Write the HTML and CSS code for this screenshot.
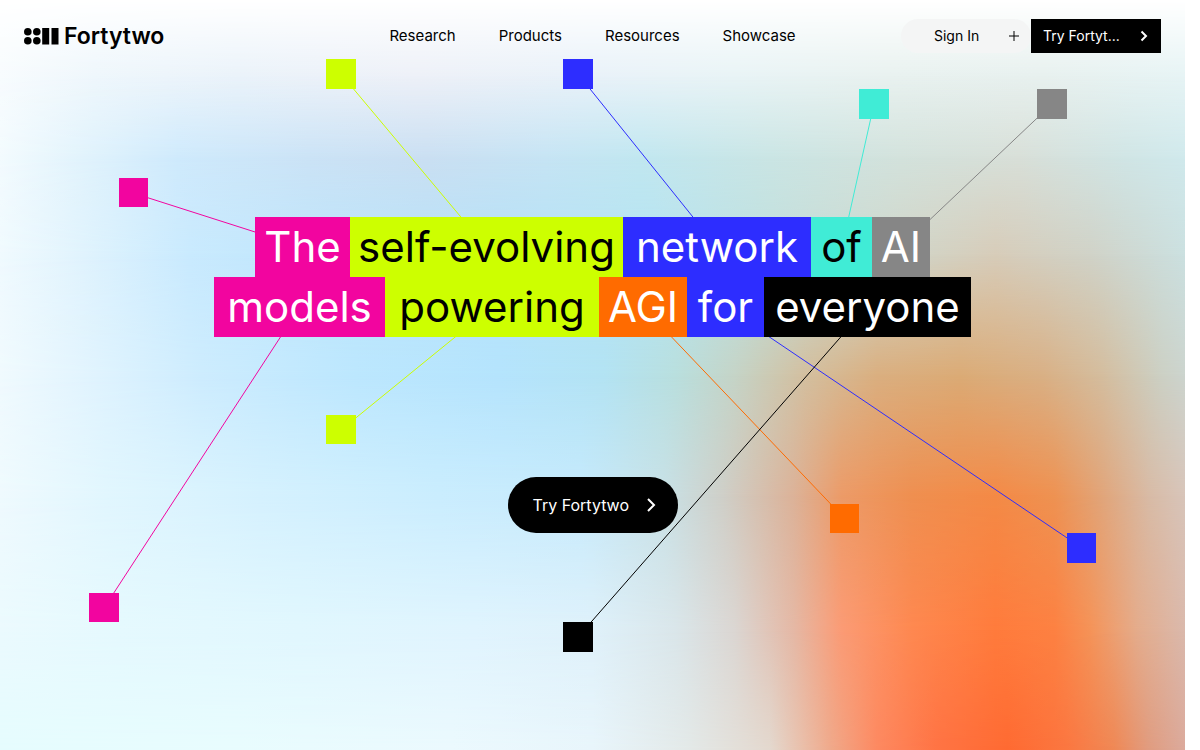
FILE: index.html
```html
<!DOCTYPE html>
<html lang="en">
<head>
    <meta charset="UTF-8">
    <meta name="viewport" content="width=device-width, initial-scale=1.0">
    <title>Fortytwo</title>
    <link rel="stylesheet" href="styles.css">
</head>
<body>
    <div class="page">
        <div class="glow" aria-hidden="true">
            <div class="band band-1"></div>
            <div class="band band-2"></div>
            <div class="band band-3"></div>
            <div class="band band-4"></div>
            <div class="band band-5"></div>
            <div class="band band-6"></div>
            <div class="band band-7"></div>
        </div>

        <!-- lines and nodes behind the headline -->
        <svg class="network" viewBox="0 0 1185 750" preserveAspectRatio="none" aria-hidden="true">
            <g class="lines">
                <path stroke="#f2059f" d="M133 193L302 247M104 608L300 307"/>
                <path stroke="#cdff00" d="M341 74L486 247M341 430L492 307"/>
                <path stroke="#2d2dff" d="M578 74L717 247M1082 548L725 307"/>
                <path stroke="#40ecd6" d="M874 104L842 247"/>
                <path stroke="#868686" d="M1052 104L901 247"/>
                <path stroke="#ff6b00" d="M845 519L643 307"/>
                <path stroke="#000" d="M578 637L867 307"/>
            </g>
            <path fill="#f2059f" d="M119 178h29v29h-29zM89 593h30v29h-30z"/>
            <path fill="#cdff00" d="M326 59h30v30h-30zM326 415h30v29h-30z"/>
            <path fill="#2d2dff" d="M563 59h30v30h-30zM1067 533h29v30h-29z"/>
            <path fill="#40ecd6" d="M859 89h30v30h-30z"/>
            <path fill="#868686" d="M1037 89h30v30h-30z"/>
            <path fill="#ff6b00" d="M830 504h29v29h-29z"/>
            <path fill="#000" d="M563 622h30v30h-30z"/>
        </svg>

        <header class="header">
            <a class="logo" href="#">
                <svg width="35" height="17" viewBox="0 0 35 17" aria-hidden="true">
                    <circle cx="3.800" cy="3.800" r="3.800"/>
                    <circle cx="12.800" cy="3.800" r="3.800"/>
                    <circle cx="3.800" cy="12.700" r="3.800"/>
                    <circle cx="12.800" cy="12.700" r="3.800"/>
                    <path d="M18.200 0h7v16.500h-7zM27.500 0h7v16.500h-7z"/>
                </svg>
                <span>Fortytwo</span>
            </a>
            <nav class="nav">
                <a href="#">Research</a>
                <a href="#">Products</a>
                <a href="#">Resources</a>
                <a href="#">Showcase</a>
            </nav>
            <div class="actions">
                <a class="sign-in" href="#">
                    <span>Sign In</span>
                    <svg width="12" height="12" viewBox="0 0 12 12" aria-hidden="true"><path d="M6 1v10M1 6h10"/></svg>
                </a>
                <a class="try" href="#">
                    <span>Try Fortyt...</span>
                    <svg width="8" height="12" viewBox="0 0 8 12" aria-hidden="true"><path d="M1.500 1.500L6 6L1.500 10.500"/></svg>
                </a>
            </div>
        </header>

        <main class="hero">
            <h1>
                <span class="row row-1"><span class="pink">The</span> <span class="lime">self-evolving</span> <span class="blue">network</span> <span class="teal">of</span> <span class="gray">AI</span></span>
                <span class="row row-2"><span class="pink">models</span> <span class="lime">powering</span> <span class="orange">AGI</span> <span class="blue">for</span> <span class="black">everyone</span></span>
            </h1>
            <a class="cta" href="#">
                <span>Try Fortytwo</span>
                <svg width="10" height="16" viewBox="0 0 10 16" aria-hidden="true"><path d="M2 2L8 8L2 14"/></svg>
            </a>
        </main>
    </div>
</body>
</html>
```
FILE: styles.css
```css
* {
    box-sizing: border-box;
}

body {
    margin: 0;
    padding-right: 15px;
    background-color: #fff;
    color: #000;
    font-family: Inter, "Liberation Sans", sans-serif;
}

a {
    color: inherit;
    text-decoration: none;
}

.page {
    position: relative;
    min-height: 100vh;
    overflow: hidden;
}

/* background: every band fades in over the one before it */
.glow,
.band,
.network {
    position: absolute;
    inset: 0;
    width: 100%;
    height: 100%;
}

.band-1 {
    background: linear-gradient(90deg, #f8fcfe 0%, #eff7fc 8%, #ebf3fa 20%, #eef1f8 35%, #e9f2f9 50%, #e9f4f6 62%, #e9f2f0 75%, #e8f1ef 88%, #e7f4f5 100%);
    mask-image: linear-gradient(transparent 0%, #000 10%);
}

.band-2 {
    background: linear-gradient(90deg, #f3fbfe 0%, #e1f3fc 7%, #cfeafc 15%, #cbe3f6 26%, #cadff2 36%, #c6e4f4 46%, #c1e7f0 54%, #cae5e4 65%, #d3e2dc 76%, #d8dfd8 86%, #d0e5e5 95%, #d0e9ec 100%);
    mask-image: linear-gradient(transparent 10%, #000 21%);
}

.band-3 {
    background: linear-gradient(90deg, #f0fafe 0%, #e0f3fd 7%, #c9eafe 16%, #bde5fb 28%, #b5e1f8 42%, #b5e4f2 55%, #bfe0de 64%, #cfd8cd 74%, #d7ccb9 84%, #d0d2c7 92%, #cbe0e0 100%);
    mask-image: linear-gradient(transparent 21%, #000 34%);
}

.band-4 {
    background: linear-gradient(90deg, #f0fafe 0%, #e2f4fe 7%, #cdecfe 17%, #bce7fe 30%, #b5e4fd 42%, #b3e3f3 51%, #b9dfde 57%, #c5d4c7 62%, #d3bf9f 68%, #daaf80 74%, #dbab76 81%, #d9b085 88%, #d4bd9e 93%, #ccd0c4 98%, #ccd4ce 100%);
    mask-image: linear-gradient(transparent 34%, #000 50%);
}

.band-5 {
    background: linear-gradient(90deg, #effafe 0%, #e1f6fe 9%, #d5f1fe 22%, #caedfe 37%, #c6eafc 49%, #c8e1e6 56%, #cfcfc8 61%, #dcb298 67%, #ec9b68 71%, #ef8f50 77%, #f48a46 84%, #ee9252 89%, #e1a57a 93%, #d8bba6 97%, #d8c5ba 100%);
    mask-image: linear-gradient(transparent 50%, #000 66%);
}

.band-6 {
    background: linear-gradient(90deg, #ebfafe 0%, #e5f9fe 10%, #e1f7fe 25%, #e0f4fe 40%, #dff1fa 50%, #dae6ea 57%, #dbd6d2 62%, #e5b8a5 67%, #fb9b75 71%, #fe8850 77%, #ff7b3c 84%, #fd8142 89%, #f59358 92%, #e4ac8c 96%, #dab9ac 100%);
    mask-image: linear-gradient(transparent 66%, #000 84%);
}

.band-7 {
    background: linear-gradient(90deg, #e5fcfe 0%, #e8fcfe 20%, #ebf9fe 38%, #e8f5fb 50%, #e3e9e8 58%, #e3d8ce 65%, #efaa8c 70%, #fd8961 74%, #ff7344 79%, #ff6a32 85%, #fb7640 90%, #ef8855 94%, #e09c80 97%, #dbaa9c 100%);
    mask-image: linear-gradient(transparent 84%, #000 100%);
}

.lines {
    fill: none;
    stroke-width: 1;
}

.header {
    position: relative;
    display: grid;
    grid-template-columns: 1fr auto 1fr;
    align-items: center;
    height: 72px;
    padding: 0 24px;
}

.logo {
    display: flex;
    align-items: center;
    gap: 5px;
    font-size: 23px;
    font-weight: 600;
}

.nav {
    display: flex;
    gap: 43px;
    padding-bottom: 2px;
    font-size: 15px;
}

.actions {
    display: flex;
    justify-content: flex-end;
    font-size: 14px;
}

.actions span {
    padding-bottom: 2px;
}

.actions svg,
.cta svg {
    flex: none;
    fill: none;
    stroke: currentColor;
}

.sign-in,
.try {
    display: flex;
    align-items: center;
    justify-content: space-between;
    width: 130px;
    height: 34px;
}

.sign-in {
    padding: 0 11px 0 33px;
    border-radius: 17px;
    background-color: #f4f5f5;
}

.try {
    padding: 0 13px 0 12px;
    background-color: #000;
    color: #fff;
    white-space: nowrap;
}

.try svg {
    stroke-width: 2;
}

.hero {
    position: relative;
    display: flex;
    flex-direction: column;
    align-items: center;
    padding-top: 145px;
}

h1 {
    margin: 0 0 140px;
    font-size: 42px;
    font-weight: 400;
    line-height: 60px;
    text-align: center;
}

.row {
    display: grid;
    justify-content: center;
}

.row-1 {
    grid-template-columns: 95px 273px 188px 61px 58px;
}

.row-2 {
    grid-template-columns: 171px 214px 88px 77px 207px;
}

.pink {
    background-color: #f2059f;
    color: #fff;
}

.lime {
    background-color: #cdff00;
}

.blue {
    background-color: #2d2dff;
    color: #fff;
}

.teal {
    background-color: #40ecd6;
}

.gray {
    background-color: #868686;
    color: #fff;
}

.orange {
    background-color: #ff6b00;
    color: #fff;
}

.black {
    background-color: #000;
    color: #fff;
}

.cta {
    display: flex;
    align-items: center;
    justify-content: space-between;
    width: 170px;
    height: 56px;
    padding: 0 22px 0 25px;
    border-radius: 28px;
    background-color: #000;
    color: #fff;
    font-size: 16px;
}

.cta svg {
    stroke-width: 2;
}
```
